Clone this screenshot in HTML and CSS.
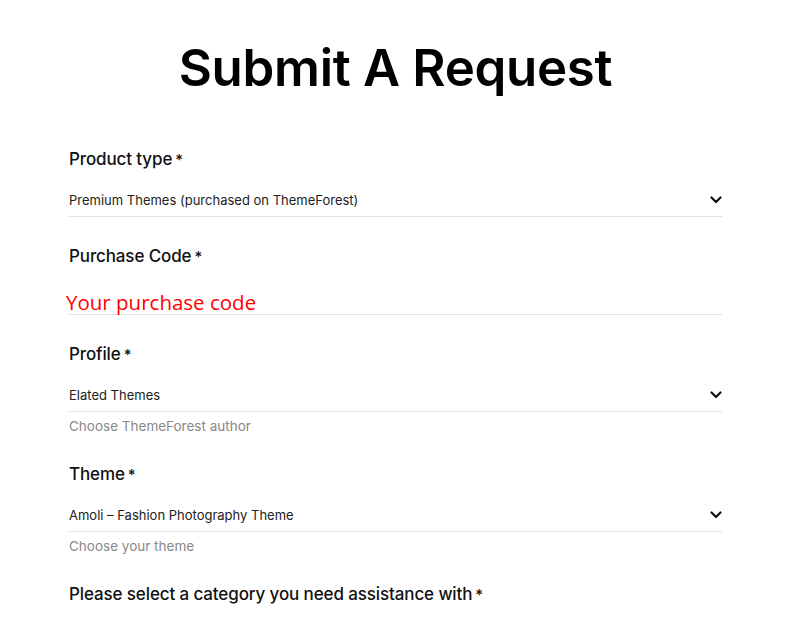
FILE: index.html
```html
<!DOCTYPE html>
<html lang="en">
<head>
<meta charset="utf-8">
<title>Submit A Request</title>
<link rel="stylesheet" href="styles.css">
</head>
<body>
<main class="page">
  <h1 class="title">Submit A Request</h1>
  <form class="form">
    <div class="field">
      <div class="label">Product type<span class="req">*</span></div>
      <div class="control select">
        <span class="value">Premium Themes (purchased on ThemeForest)</span>
        <svg class="chev" width="12" height="8" viewBox="0 0 12 8"><polyline points="1.5,1.5 6,6 10.5,1.5" fill="none" stroke="#111" stroke-width="2.2" stroke-linecap="round" stroke-linejoin="round"/></svg>
      </div>
    </div>
    <div class="field">
      <div class="label">Purchase Code<span class="req">*</span></div>
      <div class="control input">
        <span class="placeholder">Your purchase code</span>
      </div>
    </div>
    <div class="field">
      <div class="label">Profile<span class="req">*</span></div>
      <div class="control select">
        <span class="value">Elated Themes</span>
        <svg class="chev" width="12" height="8" viewBox="0 0 12 8"><polyline points="1.5,1.5 6,6 10.5,1.5" fill="none" stroke="#111" stroke-width="2.2" stroke-linecap="round" stroke-linejoin="round"/></svg>
      </div>
      <div class="help">Choose ThemeForest author</div>
    </div>
    <div class="field">
      <div class="label">Theme<span class="req">*</span></div>
      <div class="control select">
        <span class="value">Amoli – Fashion Photography Theme</span>
        <svg class="chev" width="12" height="8" viewBox="0 0 12 8"><polyline points="1.5,1.5 6,6 10.5,1.5" fill="none" stroke="#111" stroke-width="2.2" stroke-linecap="round" stroke-linejoin="round"/></svg>
      </div>
      <div class="help">Choose your theme</div>
    </div>
    <div class="field">
      <div class="label">Please select a category you need assistance with<span class="req">*</span></div>
    </div>
  </form>
</main>
</body>
</html>
```

FILE: styles.css
```css
html, body {
  margin: 0;
  padding: 0;
  background: #fff;
}
body {
  font-family: Inter, "DejaVu Sans", sans-serif;
  color: #111;
}
.page {
  width: 653px;
  padding: 0 0 0 69px;
}
.title {
  margin: 0;
  padding-top: 38px;
  font-size: 51px;
  line-height: 60px;
  font-weight: 600;
  letter-spacing: -0.3px;
  text-align: center;
  color: #000;
}
.form {
  margin-top: 49px;
}
.field {
  margin-top: 27px;
}
.field:first-child {
  margin-top: 0;
}
.label {
  font-size: 17px;
  line-height: 24px;
  font-weight: 500;
  letter-spacing: -0.12px;
  color: #111;
}
.req {
  margin-left: 3px;
  font-size: 15px;
}
.control {
  display: flex;
  align-items: center;
  justify-content: space-between;
  margin-top: 12px;
  height: 32px;
  border-bottom: 1px solid #e2e2e2;
}
.value {
  font-size: 13px;
  color: #222;
}
.input {
  height: 33px;
  align-items: flex-end;
}
.placeholder {
  font-family: "Open Sans", Lato, sans-serif;
  font-size: 20.5px;
  line-height: 24px;
  color: #ff0000;
  margin-left: -3px;
}
.help {
  margin-top: 6px;
  font-size: 13.5px;
  line-height: 17px;
  color: #888;
}
```
